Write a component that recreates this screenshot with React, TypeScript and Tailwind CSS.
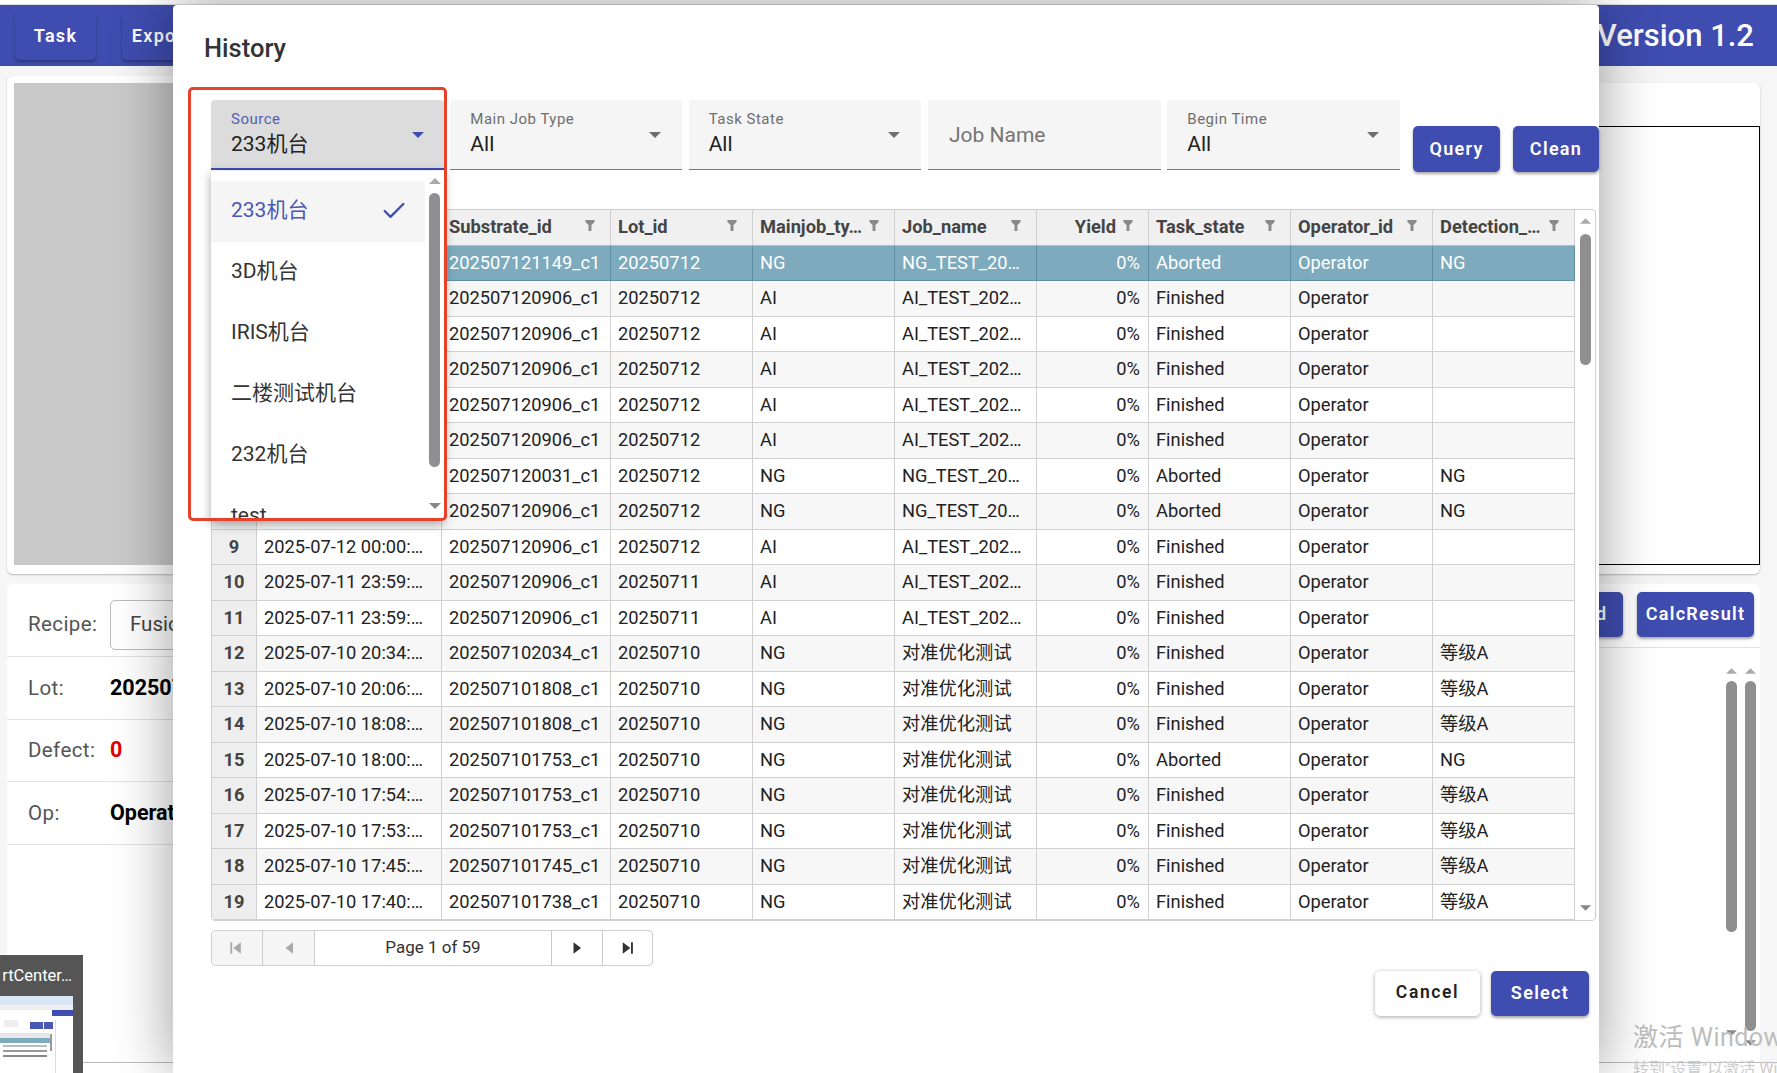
import { Check } from "lucide-react";

const gridCols = "grid grid-cols-[45px_185px_169px_142px_142px_142px_112px_142px_142px_142px]";
const headers = ["Substrate_id", "Lot_id", "Mainjob_ty…", "Job_name", "Yield", "Task_state", "Operator_id", "Detection_…"];

type Row = [string, string, string, string, string, string, string];

const AI = "AI_TEST_202…";
const NGT = "NG_TEST_20…";
const CN = "对准优化测试";

// date, substrate, lot, type, job, state, detection
const rows: Row[] = [
  ["2025-07-12 11:49:…", "202507121149_c1", "20250712", "NG", NGT, "Aborted", "NG"],
  ["2025-07-12 09:06:…", "202507120906_c1", "20250712", "AI", AI, "Finished", ""],
  ["2025-07-12 09:06:…", "202507120906_c1", "20250712", "AI", AI, "Finished", ""],
  ["2025-07-12 09:06:…", "202507120906_c1", "20250712", "AI", AI, "Finished", ""],
  ["2025-07-12 09:06:…", "202507120906_c1", "20250712", "AI", AI, "Finished", ""],
  ["2025-07-12 09:06:…", "202507120906_c1", "20250712", "AI", AI, "Finished", ""],
  ["2025-07-12 00:31:…", "202507120031_c1", "20250712", "NG", NGT, "Aborted", "NG"],
  ["2025-07-12 00:10:…", "202507120906_c1", "20250712", "NG", NGT, "Aborted", "NG"],
  ["2025-07-12 00:00:…", "202507120906_c1", "20250712", "AI", AI, "Finished", ""],
  ["2025-07-11 23:59:…", "202507120906_c1", "20250711", "AI", AI, "Finished", ""],
  ["2025-07-11 23:59:…", "202507120906_c1", "20250711", "AI", AI, "Finished", ""],
  ["2025-07-10 20:34:…", "202507102034_c1", "20250710", "NG", CN, "Finished", "等级A"],
  ["2025-07-10 20:06:…", "202507101808_c1", "20250710", "NG", CN, "Finished", "等级A"],
  ["2025-07-10 18:08:…", "202507101808_c1", "20250710", "NG", CN, "Finished", "等级A"],
  ["2025-07-10 18:00:…", "202507101753_c1", "20250710", "NG", CN, "Aborted", "NG"],
  ["2025-07-10 17:54:…", "202507101753_c1", "20250710", "NG", CN, "Finished", "等级A"],
  ["2025-07-10 17:53:…", "202507101753_c1", "20250710", "NG", CN, "Finished", "等级A"],
  ["2025-07-10 17:45:…", "202507101745_c1", "20250710", "NG", CN, "Finished", "等级A"],
  ["2025-07-10 17:40:…", "202507101738_c1", "20250710", "NG", CN, "Finished", "等级A"],
];

const menuItems = ["233机台", "3D机台", "IRIS机台", "二楼测试机台", "232机台", "test"];

function Caret({ className }: { className: string }) {
  return (
    <svg viewBox="0 0 10 5" className={className} fill="currentColor">
      <path d="M0 0l5 5 5-5z" />
    </svg>
  );
}

function CaretUp({ className }: { className: string }) {
  return (
    <svg viewBox="0 0 10 5" className={className} fill="currentColor">
      <path d="M0 5l5-5 5 5z" />
    </svg>
  );
}

function Funnel() {
  return (
    <svg viewBox="0 0 10 12" className="h-[11px] w-[10px] text-[#8a8a8a]" fill="currentColor">
      <path d="M0 0h10v2.2L6.6 5.4V12H3.4V5.4L0 2.2z" />
    </svg>
  );
}

function FilterSelect({ label, width = "w-[233px]" }: { label: string; width?: string }) {
  return (
    <div className={`relative h-[70px] ${width} rounded-t border-b border-[#777] bg-[#f5f5f5] pl-5 pt-[9px]`}>
      <div className="text-[15px] leading-[20px] tracking-[0.5px] text-[#6f6f6f]">{label}</div>
      <div className="mt-[3px] text-[21px] leading-[24px] text-[#222]">All</div>
      <Caret className="absolute right-[21px] top-[32px] h-[6px] w-[12px] text-[#6f6f6f]" />
    </div>
  );
}

function ActionButton({ children, className }: { children: string; className: string }) {
  return (
    <button
      type="button"
      className={`rounded-[5px] bg-[#3f4db0] pb-[2px] text-[18px] font-semibold tracking-[1.3px] text-white shadow-[0_2px_3px_rgba(0,0,0,0.35)] ${className}`}
    >
      {children}
    </button>
  );
}

function InfoRow({ label, className, children }: { label: string; className: string; children: React.ReactNode }) {
  return (
    <div className={`flex items-center border-b border-[#e2e2e2] pl-[21px] ${className}`}>
      <span className="w-[82px] text-[20.5px] tracking-[0.4px] text-[#555]">{label}</span>
      {children}
    </div>
  );
}

function Thumbnail() {
  return (
    <div className="absolute bottom-0 left-0 h-[118px] w-[83px] overflow-hidden bg-[#555]">
      <div className="flex h-[41px] justify-end whitespace-nowrap pr-[11px] pt-[11px] text-[16.5px] leading-[20px] text-white">rtCenter…</div>
      <div className="relative h-[77px] w-[73px] overflow-hidden bg-white">
        <div className="h-[9px] bg-[#d9e6f5]" />
        <div className="h-[5px] bg-[#eeeeee]" />
        <div className="absolute right-0 top-[14px] h-[6px] w-[21px] bg-[#3f4db0]" />
        <div className="absolute left-[30px] top-[26px] h-[7px] w-[13px] bg-[#4a58b5]" />
        <div className="absolute left-[44px] top-[26px] h-[7px] w-[9px] bg-[#4a58b5]" />
        <div className="absolute left-[4px] top-[24px] h-[7px] w-[14px] bg-[#eeeeee]" />
        <div className="absolute left-0 top-[37px] h-[5px] w-[50px] bg-[#e6e6e6]" />
        <div className="absolute left-0 top-[42px] h-[5px] w-[50px] bg-[#7daabd]" />
        <div className="absolute left-[50px] top-[38px] h-[17px] w-[2px] bg-[#999]" />
        <div className="absolute left-[55px] top-[24px] h-[53px] w-px bg-[#ddd]" />
        <div className="flex flex-col gap-[3px] pl-[3px] pt-[25px]">
          <div className="h-[2px] w-[44px] bg-[#bbb]" />
          <div className="h-[2px] w-[44px] bg-[#999]" />
          <div className="h-[2px] w-[44px] bg-[#bbb]" />
          <div className="h-[2px] w-[44px] bg-[#999]" />
          <div className="h-[2px] w-[44px] bg-[#888]" />
        </div>
      </div>
    </div>
  );
}

function PagerArrow({ d, dim, className }: { d: string; dim?: boolean; className: string }) {
  return (
    <div className={`flex items-center justify-center border-[#ccc] ${dim ? "bg-[#f5f5f5] text-[#aaa]" : "text-[#333]"} ${className}`}>
      <svg viewBox="0 0 12 12" className="h-[14px] w-[14px]" fill="currentColor">
        <path d={d} />
      </svg>
    </div>
  );
}

export default function App() {
  return (
    <div className="relative flex h-[1073px] w-[1777px] flex-col overflow-hidden bg-[#f6f6f6] font-['Roboto','Noto_Sans_CJK_SC',sans-serif]">
      <div className="h-[5px] shrink-0 border-b border-[#ddd] bg-white" />

      {/* header behind the dialog */}
      <header className="flex h-[61px] shrink-0 items-center bg-[#3f4db0] pl-[15px] pr-[23px] text-white">
        <div className="flex h-[48px] w-[81px] items-center justify-center rounded-[5px] text-[18px] font-semibold tracking-[1.3px] shadow-[0_2px_3px_rgba(0,0,0,0.3)]">Task</div>
        <div className="ml-[26px] flex h-[48px] w-[80px] items-center justify-center rounded-[5px] text-[18px] font-semibold tracking-[1.3px] shadow-[0_2px_3px_rgba(0,0,0,0.3)]">Export</div>
        <div className="ml-auto pt-[2px] text-[31px] font-medium">Version 1.2</div>
      </header>

      {/* page behind the dialog */}
      <div className="flex min-h-0 flex-1 flex-col pl-[7px] pr-[17px] pt-[10px]">
        <div className="grid h-[498px] shrink-0 grid-cols-2 gap-[8px]">
          <div className="rounded-md bg-white px-[7px] pb-[9px] pt-[7px] shadow-[0_1px_2px_rgba(0,0,0,0.25)]">
            <div className="h-full bg-[#c9c9c9]" />
          </div>
          <div className="mt-[7px] rounded-md bg-white pb-[9px] pr-0 pt-[43px] shadow-[0_1px_2px_rgba(0,0,0,0.25)]">
            <div className="h-full border border-black" />
          </div>
        </div>

        <div className="mt-[10px] grid min-h-0 flex-1 grid-cols-2 gap-[8px]">
          <div className="rounded-t-md bg-white pt-[1px]">
            <InfoRow label="Recipe:" className="h-[72px] pt-[8px]">
              <div className="flex h-[50px] w-[300px] items-center rounded-[5px] border border-[#bbb] pl-[19px] text-[20.5px] text-[#444]">FusionCenter</div>
            </InfoRow>
            <InfoRow label="Lot:" className="h-[63px]">
              <span className="text-[21.5px] font-bold text-black">202507121149</span>
            </InfoRow>
            <InfoRow label="Defect:" className="h-[62px]">
              <span className="text-[21.5px] font-bold text-[#e00000]">0</span>
            </InfoRow>
            <InfoRow label="Op:" className="h-[63px]">
              <span className="text-[21.5px] font-bold text-black">Operator</span>
            </InfoRow>
          </div>

          <div className="flex flex-col rounded-t-md bg-white">
            <div className="flex h-[64px] shrink-0 items-start justify-end gap-[14px] border-b border-[#e2e2e2] pr-[6px] pt-[8px]">
              <ActionButton className="h-[45px] w-[96px]">Record</ActionButton>
              <ActionButton className="h-[45px] w-[117px]">CalcResult</ActionButton>
            </div>
            <div className="flex flex-1 justify-end gap-[8px] pr-[4px] pt-[20px]">
              <div className="flex w-[11px] flex-col items-center">
                <CaretUp className="h-[6px] w-[11px] text-[#aaa]" />
                <div className="mt-[7px] h-[251px] w-[11px] rounded-full bg-[#8f8f8f]" />
                <Caret className="mt-[98px] h-[6px] w-[11px] text-[#888]" />
              </div>
              <div className="flex w-[11px] flex-col items-center">
                <CaretUp className="h-[6px] w-[11px] text-[#aaa]" />
                <div className="mt-[7px] h-[350px] w-[11px] rounded-full bg-[#8f8f8f]" />
                <Caret className="mt-[9px] h-[6px] w-[11px] text-[#888]" />
              </div>
            </div>
          </div>
        </div>
      </div>
      <div className="h-[11px] shrink-0 border-t border-[#bbb] bg-white" />

      <Thumbnail />

      {/* watermark */}
      <div className="absolute left-[1633px] top-[1021px] whitespace-nowrap text-[#bdbdbd]">
        <div className="text-[25px] leading-[34px] tracking-[0.5px]">激活 Windows</div>
        <div className="pt-[3px] text-[16px] leading-[22px] text-[#cccccc]">转到"设置"以激活 Windows。</div>
      </div>

      {/* history dialog */}
      <div className="absolute bottom-0 left-[173px] top-[5px] w-[1426px] rounded-t bg-white pl-[38px] shadow-[0_0_60px_rgba(0,0,0,0.4)]">
        <h2 className="-ml-[7px] pb-[34px] pt-[25px] text-[25.5px] font-medium leading-[36px] text-[#333]">History</h2>

        <div className="flex items-start gap-[6.5px]">
          <div className="relative h-[70px] w-[233px] rounded-t border-b-2 border-[#3f4db0] bg-[#dcdcdc] pl-[20px] pt-[9px]">
            <div className="text-[15px] leading-[20px] tracking-[0.5px] text-[#5560b0]">Source</div>
            <div className="mt-[3px] text-[21px] leading-[24px] text-[#222]">233机台</div>
            <Caret className="absolute right-[20px] top-[32px] h-[6px] w-[12px] text-[#3f4db0]" />
          </div>
          <FilterSelect label="Main Job Type" width="w-[232px]" />
          <FilterSelect label="Task State" />
          <div className="flex h-[70px] w-[233px] items-center rounded-t border-b border-[#777] bg-[#f5f5f5] pl-[21px] pt-[2px] text-[21px] text-[#757575]">Job Name</div>
          <FilterSelect label="Begin Time" />
          <ActionButton className="ml-[6.5px] mt-[26px] h-[46px] w-[87px]">Query</ActionButton>
          <ActionButton className="ml-[6.5px] mt-[26px] h-[46px] w-[86px]">Clean</ActionButton>
        </div>

        {/* grid */}
        <div className="mt-[36.5px] flex h-[712.5px] w-[1385px] overflow-hidden rounded-[4px] border border-[#cfcfcf] text-[18.3px] text-[#222]">
          <div className="w-[1363px] shrink-0">
            <div className={`${gridCols} h-[36px] border-b border-[#bdbdbd] bg-[#f0f0f0] font-bold text-[#444]`}>
              <div className="border-r border-[#d0d0d0]" />
              <div className="border-r border-[#d0d0d0]" />
              {headers.map((h) => (
                <div key={h} className={`flex items-center border-r border-[#d0d0d0] pl-[7px] pr-[15px] ${h === "Yield" ? "justify-end" : "justify-between"}`}>
                  <span className="whitespace-nowrap">{h}</span>
                  <span className={`-translate-y-[2px] ${h === "Yield" ? "ml-[7px]" : ""}`}>
                    <Funnel />
                  </span>
                </div>
              ))}
            </div>
            {rows.map((r, i) => {
              const selected = i === 0;
              const bg = selected ? "bg-[#7daabd] text-white" : i % 2 === 1 ? "bg-[#f7f7f7]" : "bg-white";
              const line = selected ? "border-[#5f8ea3]" : "border-[#d0d0d0]";
              const cell = `truncate border-r pl-[7px] leading-[33px] ${line}`;
              return (
                <div key={i} className={`${gridCols} h-[35.5px] border-b ${line} ${bg}`}>
                  <div className="border-r border-[#d0d0d0] bg-[#eeeeee] text-center font-bold leading-[33px] text-[#444]">{i + 1}</div>
                  <div className={cell}>{r[0]}</div>
                  <div className={cell}>{r[1]}</div>
                  <div className={cell}>{r[2]}</div>
                  <div className={cell}>{r[3]}</div>
                  <div className={cell}>{r[4]}</div>
                  <div className={`border-r pr-2 text-right leading-[33px] ${line}`}>0%</div>
                  <div className={cell}>{r[5]}</div>
                  <div className={cell}>Operator</div>
                  <div className={cell}>{r[6]}</div>
                </div>
              );
            })}
          </div>
          <div className="flex flex-1 flex-col items-center pt-[8px]">
            <CaretUp className="h-[6px] w-[11px] text-[#aaa]" />
            <div className="mt-[10px] h-[131px] w-[11px] rounded-full bg-[#8f8f8f]" />
            <Caret className="mt-[540px] h-[6px] w-[11px] text-[#888]" />
          </div>
        </div>

        {/* pager */}
        <div className="mt-[9px] flex h-[36px] w-[442px] overflow-hidden rounded-[4px] border border-[#cfcfcf] text-[17px] text-[#333]">
          <PagerArrow d="M2 1h1.6v10H2zM11 1v10L4.5 6z" dim className="w-[51px] border-r pr-[4px]" />
          <PagerArrow d="M9.5 1v10L3 6z" dim className="w-[52px] border-r" />
          <div className="flex w-[236px] items-center justify-center">Page 1 of 59</div>
          <PagerArrow d="M3 1v10l6.5-5z" className="w-[52px] border-x" />
          <PagerArrow d="M1.5 1v10L8 6zM8.6 1h1.6v10H8.6z" className="flex-1" />
        </div>

        {/* footer buttons */}
        <div className="mt-[5px] flex w-[1378px] justify-end gap-[11px]">
          <button type="button" className="h-[45px] w-[105px] rounded-[5px] bg-white pb-[2px] text-[17.5px] font-semibold tracking-[1.6px] text-[#222] shadow-[0_1px_4px_rgba(0,0,0,0.35)]">Cancel</button>
          <ActionButton className="h-[45px] w-[98px]">Select</ActionButton>
        </div>
      </div>

      {/* open dropdown */}
      <div className="absolute left-[211px] top-[171px] h-[350px] w-[233px] overflow-hidden bg-white shadow-[0_3px_10px_rgba(0,0,0,0.35)]">
        <div className="flex h-full">
          <div className="w-[214px] shrink-0 pt-[10px]">
            {menuItems.map((m, i) => (
              <div key={m} className={`flex h-[61px] items-center justify-between pb-[2px] pl-[20px] pr-[17px] text-[21px] ${i === 0 ? "bg-[#f5f5f5] text-[#4a58b5]" : "text-[#333]"}`}>
                <span>{m}</span>
                {i === 0 && <Check className="h-[28px] w-[28px] text-[#3f4db0]" strokeWidth={2} />}
              </div>
            ))}
          </div>
          <div className="flex flex-1 flex-col items-center pt-[7px]">
            <CaretUp className="h-[6px] w-[12px] text-[#aaa]" />
            <div className="mt-[9px] h-[274px] w-[11px] rounded-full bg-[#8f8f8f]" />
            <Caret className="mt-[36px] h-[6px] w-[12px] text-[#888]" />
          </div>
        </div>
      </div>

      {/* red annotation box */}
      <div className="absolute left-[188px] top-[87px] h-[434px] w-[259px] rounded-[5px] border-[3px] border-[#e8412a]" />
    </div>
  );
}
